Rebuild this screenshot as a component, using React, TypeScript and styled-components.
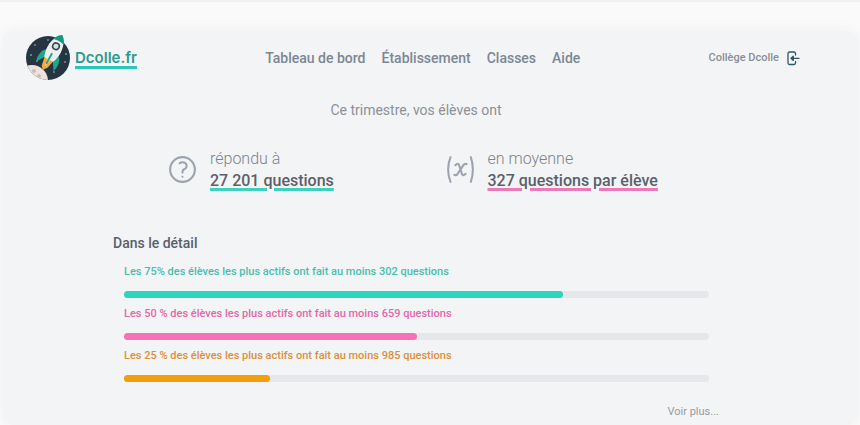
import React from "react";
import styled, { createGlobalStyle } from "styled-components";
import { HiOutlineQuestionMarkCircle, HiOutlineVariable } from "react-icons/hi2";

const GlobalStyle = createGlobalStyle`
  * { box-sizing: border-box; }
  body {
    margin: 0;
    background: #fafafa;
    font-family: Roboto, "Liberation Sans", sans-serif;
    color: #4b5563;
  }
  a { color: inherit; text-decoration: none; }
`;

const Page = styled.div`
  border-top: 2px solid #f1f1f1;
  padding: 29px 2px 0;
  overflow: hidden;
`;

const Panel = styled.div`
  background: #f3f4f6;
  border-radius: 10px;
  box-shadow: 0 0 16px rgba(0, 0, 0, 0.04);
  padding: 4px 52px 5px 24px;
`;

const Header = styled.header`
  display: flex;
  align-items: center;
  justify-content: space-between;
  height: 46px;
  padding-right: 6px;
`;

const Brand = styled.a`
  display: flex;
  align-items: center;
  gap: 5px;
`;

const Underlined = styled.span<{ $line: string }>`
  text-decoration: underline;
  text-decoration-color: ${(p) => p.$line};
  text-decoration-thickness: 3px;
  text-underline-offset: 2px;
`;

const BrandName = styled(Underlined)`
  font-family: Inter, "Liberation Sans", sans-serif;
  font-size: 15px;
  line-height: 20px;
  font-weight: 600;
  text-underline-offset: 3px;
  color: #2c9a8c;
`;

const Nav = styled.nav`
  display: flex;
  gap: 16px;
  font-size: 14px;
  line-height: 20px;
  font-weight: 500;
  color: #7c8794;
`;

const Account = styled.div`
  display: flex;
  align-items: center;
  gap: 8px;
  font-size: 11px;
  line-height: 16px;
  font-weight: 500;
  color: #8a8f96;
`;

const LogoutButton = styled.button`
  display: flex;
  padding: 0;
  border: 0;
  background: none;
  color: #2f5566;
  cursor: pointer;
`;

const Content = styled.main`
  margin: 0 87px;
`;

const Intro = styled.p`
  margin: 19px 0 0;
  text-align: center;
  font-size: 14px;
  line-height: 20px;
  color: #8d9197;
`;

const Stats = styled.section`
  display: grid;
  grid-template-columns: 1fr 1fr;
  gap: 2px;
  margin-top: 26px;
  padding-left: 53px;
`;

const Stat = styled.div`
  display: flex;
  align-items: center;
  gap: 11px;
  white-space: nowrap;
  svg { flex: none; color: #9ca3af; }
`;

const StatText = styled.div`
  padding-top: 2px;
`;

const StatLabel = styled.div`
  font-size: 16px;
  line-height: 22px;
  font-weight: 300;
  color: #7d838b;
`;

const StatValue = styled.div`
  font-size: 16px;
  line-height: 22px;
  font-weight: 500;
  color: #5a616b;
`;

const Heading = styled.h2`
  margin: 41px 0 9px;
  font-size: 14px;
  line-height: 20px;
  font-weight: 500;
  color: #59606c;
`;

const Levels = styled.div`
  padding: 0 10px 0 11px;
`;

const Level = styled.div`
  height: 42px;
`;

const LevelLabel = styled.div<{ $color: string }>`
  margin-bottom: 9px;
  font-size: 11px;
  line-height: 20px;
  font-weight: 500;
  color: ${(p) => p.$color};
`;

const Track = styled.div`
  height: 7px;
  border-radius: 4px;
  background: #e5e7eb;
`;

const Fill = styled.div<{ $color: string }>`
  height: 7px;
  border-radius: 4px;
  background: ${(p) => p.$color};
`;

const More = styled.div`
  display: flex;
  justify-content: flex-end;
  margin-top: 16px;
  font-size: 11px;
  line-height: 16px;
  color: #979ba1;
`;

const levels = [
  { text: "Les 75% des élèves les plus actifs ont fait au moins 302 questions", share: 75, color: "#48bfae", fill: "#2dd4bf" },
  { text: "Les 50 % des élèves les plus actifs ont fait au moins 659 questions", share: 50, color: "#e268a8", fill: "#f472b6" },
  { text: "Les 25 % des élèves les plus actifs ont fait au moins 985 questions", share: 25, color: "#dc9038", fill: "#f59e0b" },
];

const Logo = () => (
  <svg width="44" height="46" viewBox="0 0 44 46" aria-hidden="true">
    <defs>
      <clipPath id="sky"><circle cx="22" cy="23" r="22" /></clipPath>
    </defs>
    <circle cx="22" cy="23" r="22" fill="#253642" />
    <g clipPath="url(#sky)">
      <circle cx="6" cy="46" r="16" fill="#eee3dc" />
      <g fill="#c9bdba">
        <circle cx="8" cy="36" r="2" />
        <circle cx="13" cy="41" r="2" />
        <circle cx="5" cy="42" r="1" />
      </g>
      <g fill="#8d7fa0">
        <circle cx="9" cy="10" r="1" />
        <circle cx="22" cy="5" r="1" />
        <circle cx="11" cy="26" r="1" />
        <circle cx="39" cy="27" r="1" />
        <circle cx="28" cy="37" r="1" />
      </g>
      <g fill="#49b7a0">
        <circle cx="5" cy="20" r="1" />
        <circle cx="40" cy="19" r="1" />
      </g>
    </g>
    <g transform="translate(29 13) rotate(29)">
      <path d="M-5 12 L-3 22 L0 25 L3 21 L5 12Z" fill="#f3ad3d" />
      <path d="M-2 12 L0 21 L2 12Z" fill="#ffdc7d" />
      <path d="M-5 4 C-11 7 -12 14 -10 21 L-4 12Z M5 4 C11 7 12 14 10 21 L4 12Z" fill="#21a58c" />
      <path d="M0 -15 C-8 -8 -9 4 -5 13 H5 C9 4 8 -8 0 -15Z" fill="#edf0f0" />
      <path d="M0 -15 C-3 -13 -5 -10 -6 -7 Q0 -9 6 -7 C5 -10 3 -13 0 -15Z" fill="#159781" />
      <path d="M-1 6 H1 V17 L0 19 L-1 17Z" fill="#21a58c" />
      <circle cx="0" cy="-2" r="3.3" fill="#d8dee0" stroke="#354650" strokeWidth="1.6" />
    </g>
  </svg>
);

const LogoutIcon = () => (
  <svg width="13" height="15" viewBox="0 0 13 15" fill="none" stroke="currentColor" strokeWidth="1.3" strokeLinecap="round" strokeLinejoin="round" aria-hidden="true">
    <path d="M8.5 4V2.5A1.5 1.5 0 0 0 7 1H2.5A1.5 1.5 0 0 0 1 2.5V12a1.5 1.5 0 0 0 1.5 1.5H7A1.5 1.5 0 0 0 8.5 12v-1.5" />
    <path d="M12 7.3H4.5" />
    <path d="M6.3 5.2L4 7.3l2.3 2.1Z" fill="currentColor" />
  </svg>
);

export default function App() {
  return (
    <>
      <GlobalStyle />
      <Page>
        <Panel>
          <Header>
            <Brand href="#">
              <Logo />
              <BrandName $line="#2dc5b5">Dcolle.fr</BrandName>
            </Brand>
            <Nav>
              <a href="#">Tableau de bord</a>
              <a href="#">Établissement</a>
              <a href="#">Classes</a>
              <a href="#">Aide</a>
            </Nav>
            <Account>
              <span>Collège Dcolle</span>
              <LogoutButton type="button" aria-label="Déconnexion">
                <LogoutIcon />
              </LogoutButton>
            </Account>
          </Header>
          <Content>
            <Intro>Ce trimestre, vos élèves ont</Intro>
            <Stats>
              <Stat>
                <HiOutlineQuestionMarkCircle size={33} />
                <StatText>
                  <StatLabel>répondu à</StatLabel>
                  <StatValue><Underlined $line="#3fd0be">27 201 questions</Underlined></StatValue>
                </StatText>
              </Stat>
              <Stat>
                <HiOutlineVariable size={33} />
                <StatText>
                  <StatLabel>en moyenne</StatLabel>
                  <StatValue><Underlined $line="#ea7ab8">327 questions par élève</Underlined></StatValue>
                </StatText>
              </Stat>
            </Stats>
            <Heading>Dans le détail</Heading>
            <Levels>
              {levels.map((l) => (
                <Level key={l.share}>
                  <LevelLabel $color={l.color}>{l.text}</LevelLabel>
                  <Track>
                    <Fill $color={l.fill} style={{ width: `${l.share}%` }} />
                  </Track>
                </Level>
              ))}
            </Levels>
            <More><a href="#">Voir plus...</a></More>
          </Content>
        </Panel>
      </Page>
    </>
  );
}
